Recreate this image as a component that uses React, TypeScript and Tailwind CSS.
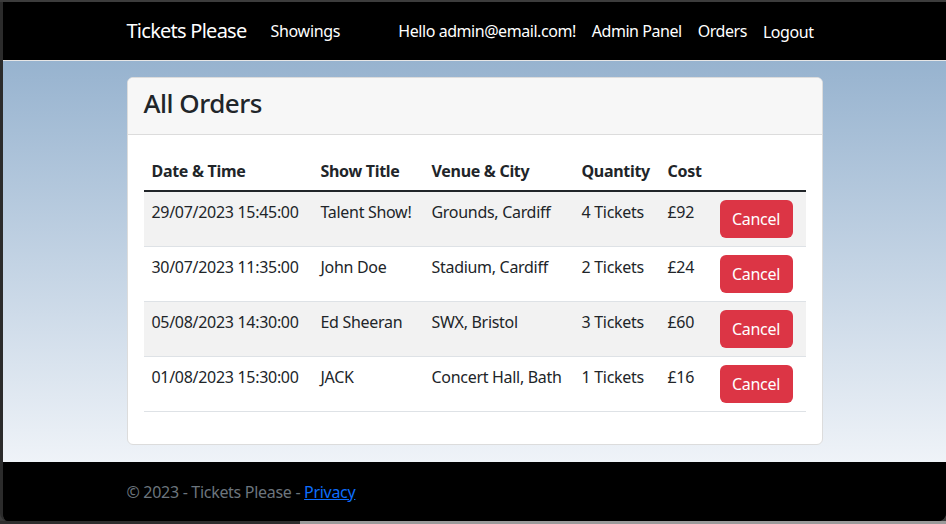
import React from "react";

const rows = [
  { date: "29/07/2023 15:45:00", title: "Talent Show!", venue: "Grounds, Cardiff", qty: "4 Tickets", cost: "£92" },
  { date: "30/07/2023 11:35:00", title: "John Doe", venue: "Stadium, Cardiff", qty: "2 Tickets", cost: "£24" },
  { date: "05/08/2023 14:30:00", title: "Ed Sheeran", venue: "SWX, Bristol", qty: "3 Tickets", cost: "£60" },
  { date: "01/08/2023 15:30:00", title: "JACK", venue: "Concert Hall, Bath", qty: "1 Tickets", cost: "£16" },
];

export default function App() {
  return (
    <div
      className="w-[946px] h-[524px] overflow-hidden bg-[#3a3a3a] flex flex-col text-[16px] leading-[24px] text-[#212529] tracking-[-0.3px]"
      style={{ fontFamily: '"Noto Sans", "Open Sans", sans-serif' }}
    >
      <div className="h-[2px] bg-[#3c3c3c] shrink-0" />
      <div className="flex-1 flex flex-col border-l-[3px] border-[#2b2b2b] rounded-b-[8px] overflow-hidden bg-black">
        <nav className="h-[59px] shrink-0 bg-black border-b border-[#e6e6e6]">
          <div className="w-[720px] mx-auto px-3 h-full flex items-center text-white">
            <span className="text-[20px] leading-[30px] mr-4 tracking-[-0.75px]">Tickets Please</span>
            <a className="px-2 leading-[24px]">Showings</a>
            <div className="flex-1" />
            <div className="flex items-center tracking-[-0.45px] pr-[1px]">
              <span className="px-2">Hello admin@email.com!</span>
              <a className="px-2">Admin Panel</a>
              <a className="px-2">Orders</a>
              <span className="px-2 mt-[2px]">Logout</span>
            </div>
          </div>
        </nav>
        <main className="flex-1 bg-gradient-to-b from-[#97b3cf] to-[#eff3f8] pt-4">
          <div className="w-[720px] mx-auto px-3">
            <div className="bg-white border border-[#dcdcdc] rounded-[6px] overflow-hidden">
              <div className="bg-[#f7f7f7] border-b border-[#dcdcdc] h-[57px] px-4 pt-[10px]">
                <h1 className="text-[26px] leading-[30px] font-medium tracking-[-0.5px]">All Orders</h1>
              </div>
              <div className="p-4">
                <table className="w-full mb-4 border-collapse table-fixed">
                  <colgroup>
                    <col className="w-[169px]" />
                    <col className="w-[111px]" />
                    <col className="w-[150px]" />
                    <col className="w-[86px]" />
                    <col className="w-[52px]" />
                    <col />
                  </colgroup>
                  <thead>
                    <tr className="border-b-2 border-[#212529] text-left">
                      <th className="px-2 pt-2 pb-[7px] font-bold">Date &amp; Time</th>
                      <th className="px-2 pt-2 pb-[7px] font-bold">Show Title</th>
                      <th className="px-2 pt-2 pb-[7px] font-bold">Venue &amp; City</th>
                      <th className="px-2 pt-2 pb-[7px] font-bold">Quantity</th>
                      <th className="px-2 pt-2 pb-[7px] font-bold">Cost</th>
                      <th className="px-2 pt-2 pb-[7px]"></th>
                    </tr>
                  </thead>
                  <tbody>
                    {rows.map((r, i) => (
                      <tr key={i} className={`border-b border-[#dee2e6] ${i % 2 === 0 ? "bg-[#f2f2f2]" : "bg-white"}`}>
                        <td className="px-2 py-2 align-top whitespace-nowrap">{r.date}</td>
                        <td className="px-2 py-2 align-top whitespace-nowrap">{r.title}</td>
                        <td className="px-2 py-2 align-top whitespace-nowrap">{r.venue}</td>
                        <td className="px-2 py-2 align-top whitespace-nowrap">{r.qty}</td>
                        <td className="px-2 py-2 align-top whitespace-nowrap">{r.cost}</td>
                        <td className="px-2 py-2 align-top">
                          <button className="bg-[#dc3545] text-white rounded-[6px] h-[38px] w-[73px] text-[16px]">Cancel</button>
                        </td>
                      </tr>
                    ))}
                  </tbody>
                </table>
              </div>
            </div>
          </div>
        </main>
        <footer className="h-[59px] shrink-0 bg-black">
          <div className="w-[720px] mx-auto px-3 h-full flex items-center text-[#6c757d]">
            <span>
              © 2023 - Tickets Please - <a className="text-[#0d6efd] underline">Privacy</a>
            </span>
          </div>
        </footer>
      </div>
      <div className="h-[3px] shrink-0 flex">
        <div className="w-[300px] bg-[#2e2e2e]" />
        <div className="flex-1 bg-[#9a9a9a]" />
      </div>
    </div>
  );
}
